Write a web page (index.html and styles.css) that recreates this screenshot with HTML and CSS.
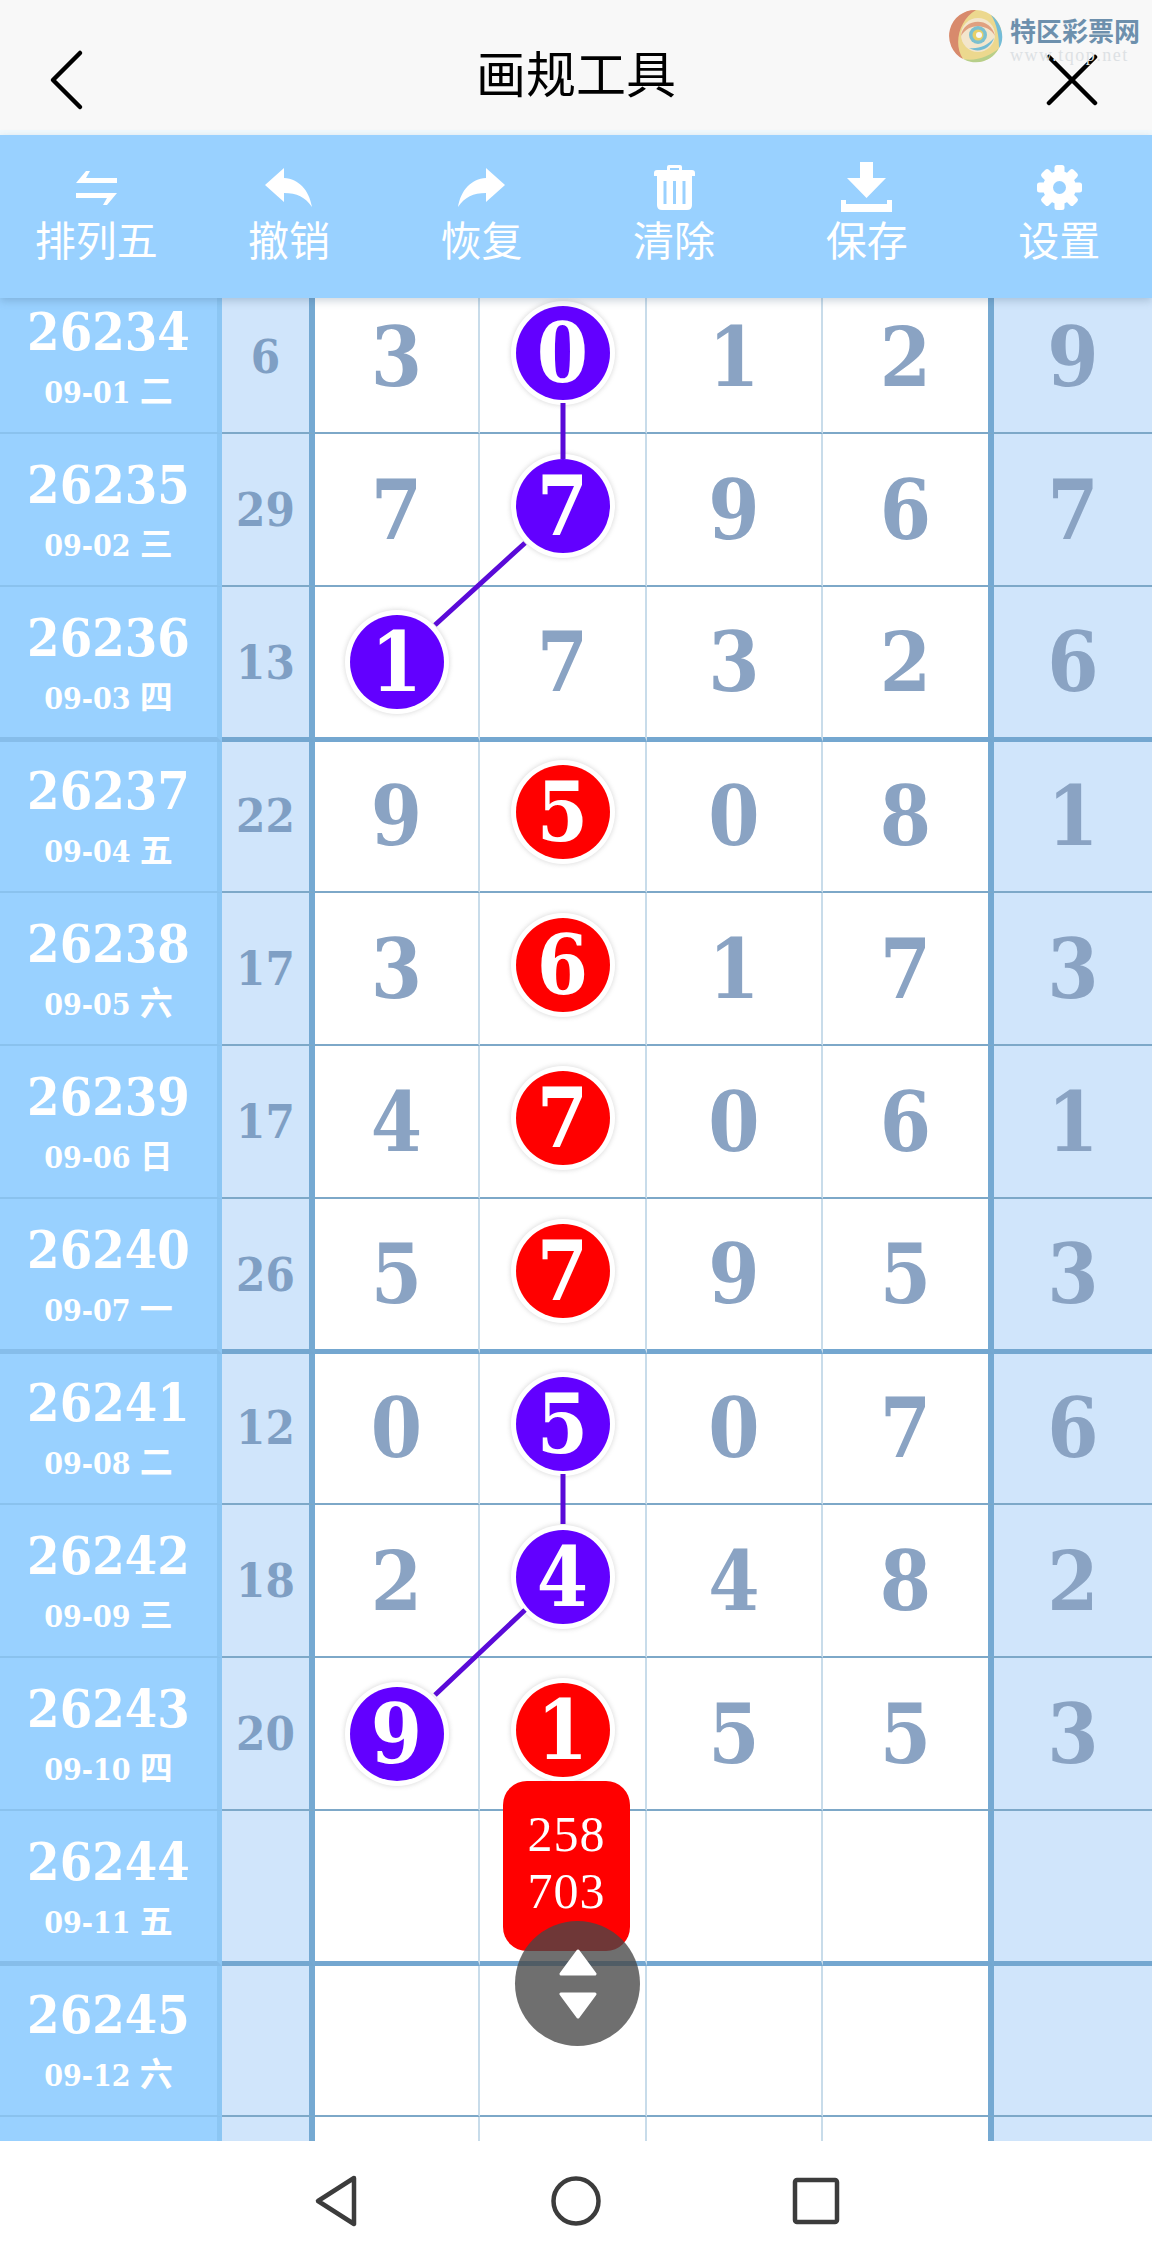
FILE: index.html
```html
<!DOCTYPE html>
<html lang="zh-CN">
  <head>
    <meta charset="UTF-8" />
    <meta name="viewport" content="width=device-width, initial-scale=1.0" />
    <title>画规工具</title>
    <link rel="stylesheet" href="styles.css">
  </head>
  <body>
    <div class="app">
      <!-- title bar -->
      <header class="topbar">
        <svg class="back-icon" width="40" height="64" viewBox="0 0 40 64">
          <path d="M34 5 L7 32 L34 59" fill="none" stroke="#000" stroke-width="4.5" stroke-linecap="round" stroke-linejoin="round" />
        </svg>
        <h1 class="title">画规工具</h1>
        <svg class="close-icon" width="52" height="52" viewBox="0 0 52 52">
          <path d="M3 3 L49 49 M49 3 L3 49" fill="none" stroke="#000" stroke-width="4.5" stroke-linecap="round" />
        </svg>
        <!-- watermark -->
        <div class="watermark">
          <svg width="54" height="56" viewBox="0 0 54 56">
            <circle cx="27" cy="28" r="26" fill="#ecd88e" />
            <path d="M27 2 A26 26 0 0 0 14 51 C4 36 10 12 27 2Z" fill="#d88a6c" />
            <path d="M14 51 A26 26 0 0 0 50 40 C42 48 26 54 14 51Z" fill="#b7cf8a" />
            <path d="M42 7 C54 16 56 32 50 40 C50 28 48 16 42 7Z" fill="#73bcd8" />
            <circle cx="29" cy="27" r="17" fill="#f3e6cc" />
            <path d="M12 28 C14 10 42 8 46 28 C40 16 20 14 12 28Z" fill="#e0a080" />
            <path d="M20 40 C30 46 42 40 45 30 C38 38 30 41 20 40Z" fill="#74bcd4" />
            <circle cx="29" cy="27" r="9" fill="#7cc0d0" />
            <circle cx="29" cy="27" r="5.5" fill="#e8d068" />
            <circle cx="30" cy="27" r="3" fill="#f8f8f8" />
          </svg>
          <div class="watermark-text">
            <div class="watermark-name">特区彩票网</div>
            <div class="watermark-url">www.tqop.net</div>
          </div>
        </div>
      </header>

      <!-- tool buttons -->
      <nav class="toolbar">
        <div class="tool">
          <div class="tool-icon">
            <svg width="41" height="35" viewBox="0 0 41 35" fill="#fff">
              <path d="M0 13 L10 1 L14 1 L10 8 L41 8 L41 13Z" />
              <path d="M0 23 L41 23 L31 35 L27 35 L31 28 L0 28Z" />
            </svg>
          </div>
          <span>排列五</span>
        </div>
        <div class="tool">
          <div class="tool-icon">
            <svg width="47" height="39" viewBox="0 0 47 39" fill="#fff">
              <path d="M0 17 L19 0 L19 10 C34 11 44 22 47 39 C40 29 32 25 19 25 L19 34Z" />
            </svg>
          </div>
          <span>撤销</span>
        </div>
        <div class="tool">
          <div class="tool-icon">
            <svg width="47" height="39" viewBox="0 0 47 39" fill="#fff">
              <path d="M47 17 L28 0 L28 10 C13 11 3 22 0 39 C7 29 15 25 28 25 L28 34Z" />
            </svg>
          </div>
          <span>恢复</span>
        </div>
        <div class="tool">
          <div class="tool-icon">
            <svg width="41" height="45" viewBox="0 0 41 45" fill="#fff">
              <path d="M13 5 L13 2 Q13 0 15 0 L26 0 Q28 0 28 2 L28 5 L38 5 Q41 5 41 8 L41 11 L0 11 L0 8 Q0 5 3 5Z M16 5 L25 5 L25 3 L16 3Z" fill-rule="evenodd" />
              <path d="M3 11 L38 11 L38 40 Q38 45 33 45 L8 45 Q3 45 3 40Z" />
              <path d="M11 16 V39 M20.500 16 V39 M30 16 V39" stroke="#99d1ff" stroke-width="3" />
            </svg>
          </div>
          <span>清除</span>
        </div>
        <div class="tool">
          <div class="tool-icon">
            <svg width="51" height="50" viewBox="0 0 51 50" fill="#fff">
              <path d="M19 0 L32 0 L32 16 L45 16 L25.500 36 L6 16 L19 16Z" />
              <path d="M0 38 L5 38 L5 42 L46 42 L46 38 L51 38 L51 50 L0 50Z" />
            </svg>
          </div>
          <span>保存</span>
        </div>
        <div class="tool">
          <div class="tool-icon">
            <svg width="45" height="45" viewBox="-22.500 -22.500 45 45" fill="#fff">
              <circle r="16.500" />
              <rect x="-5" y="-22.500" width="10" height="45" rx="2.500" />
              <rect x="-5" y="-22.500" width="10" height="45" rx="2.500" transform="rotate(45)" />
              <rect x="-5" y="-22.500" width="10" height="45" rx="2.500" transform="rotate(90)" />
              <rect x="-5" y="-22.500" width="10" height="45" rx="2.500" transform="rotate(135)" />
              <circle r="6.500" fill="#99d1ff" />
            </svg>
          </div>
          <span>设置</span>
        </div>
      </nav>

      <!-- number table -->
      <main class="board">
        <div class="rows">
          <div class="row">
            <div class="issue"><b>26234</b><small>09-01 <em>二</em></small></div>
            <div class="sum">6</div>
            <div class="num">3</div>
            <div class="num"><span class="ball purple lift">0</span></div>
            <div class="num">1</div>
            <div class="num">2</div>
            <div class="num last">9</div>
          </div>
          <div class="row">
            <div class="issue"><b>26235</b><small>09-02 <em>三</em></small></div>
            <div class="sum">29</div>
            <div class="num">7</div>
            <div class="num"><span class="ball purple lift">7</span></div>
            <div class="num">9</div>
            <div class="num">6</div>
            <div class="num last">7</div>
          </div>
          <div class="row thick">
            <div class="issue"><b>26236</b><small>09-03 <em>四</em></small></div>
            <div class="sum">13</div>
            <div class="num"><span class="ball purple">1</span></div>
            <div class="num">7</div>
            <div class="num">3</div>
            <div class="num">2</div>
            <div class="num last">6</div>
          </div>
          <div class="row">
            <div class="issue"><b>26237</b><small>09-04 <em>五</em></small></div>
            <div class="sum">22</div>
            <div class="num">9</div>
            <div class="num"><span class="ball red lift">5</span></div>
            <div class="num">0</div>
            <div class="num">8</div>
            <div class="num last">1</div>
          </div>
          <div class="row">
            <div class="issue"><b>26238</b><small>09-05 <em>六</em></small></div>
            <div class="sum">17</div>
            <div class="num">3</div>
            <div class="num"><span class="ball red lift">6</span></div>
            <div class="num">1</div>
            <div class="num">7</div>
            <div class="num last">3</div>
          </div>
          <div class="row">
            <div class="issue"><b>26239</b><small>09-06 <em>日</em></small></div>
            <div class="sum">17</div>
            <div class="num">4</div>
            <div class="num"><span class="ball red lift">7</span></div>
            <div class="num">0</div>
            <div class="num">6</div>
            <div class="num last">1</div>
          </div>
          <div class="row thick">
            <div class="issue"><b>26240</b><small>09-07 <em>一</em></small></div>
            <div class="sum">26</div>
            <div class="num">5</div>
            <div class="num"><span class="ball red lift">7</span></div>
            <div class="num">9</div>
            <div class="num">5</div>
            <div class="num last">3</div>
          </div>
          <div class="row">
            <div class="issue"><b>26241</b><small>09-08 <em>二</em></small></div>
            <div class="sum">12</div>
            <div class="num">0</div>
            <div class="num"><span class="ball purple lift">5</span></div>
            <div class="num">0</div>
            <div class="num">7</div>
            <div class="num last">6</div>
          </div>
          <div class="row">
            <div class="issue"><b>26242</b><small>09-09 <em>三</em></small></div>
            <div class="sum">18</div>
            <div class="num">2</div>
            <div class="num"><span class="ball purple lift">4</span></div>
            <div class="num">4</div>
            <div class="num">8</div>
            <div class="num last">2</div>
          </div>
          <div class="row">
            <div class="issue"><b>26243</b><small>09-10 <em>四</em></small></div>
            <div class="sum">20</div>
            <div class="num"><span class="ball purple">9</span></div>
            <div class="num"><span class="ball red lift">1</span></div>
            <div class="num">5</div>
            <div class="num">5</div>
            <div class="num last">3</div>
          </div>
          <div class="row thick">
            <div class="issue"><b>26244</b><small>09-11 <em>五</em></small></div>
            <div class="sum"></div>
            <div class="num"></div>
            <div class="num"></div>
            <div class="num"></div>
            <div class="num"></div>
            <div class="num last"></div>
          </div>
          <div class="row">
            <div class="issue"><b>26245</b><small>09-12 <em>六</em></small></div>
            <div class="sum"></div>
            <div class="num"></div>
            <div class="num"></div>
            <div class="num"></div>
            <div class="num"></div>
            <div class="num last"></div>
          </div>
          <div class="row">
            <div class="issue"></div>
            <div class="sum"></div>
            <div class="num"></div>
            <div class="num"></div>
            <div class="num"></div>
            <div class="num"></div>
            <div class="num last"></div>
          </div>
        </div>

        <!-- lines between the picked balls -->
        <svg class="links" width="1152" height="1843" viewBox="0 0 1152 1843">
          <path d="M563 105 V161 M525 245 L435 327 M563 1176 V1226 M525 1312 L435 1397" fill="none" stroke="#5a0ad8" stroke-width="5" />
        </svg>

        <div class="tip">258<br />703</div>
        <div class="updown">
          <svg width="38" height="70" viewBox="0 0 38 70" fill="#fff" stroke="#fff" stroke-width="3" stroke-linejoin="round">
            <path d="M19 2 L36 25 L2 25Z" />
            <path d="M2 45 L36 45 L19 68Z" />
          </svg>
        </div>
      </main>

      <!-- phone buttons -->
      <footer class="navbar">
        <svg width="44" height="54" viewBox="0 0 44 54">
          <path d="M40 4 L4 27 L40 50Z" fill="none" stroke="#3c3c3c" stroke-width="4.500" stroke-linejoin="round" />
        </svg>
        <svg width="52" height="52" viewBox="0 0 52 52">
          <circle cx="26" cy="26" r="22.500" fill="none" stroke="#3c3c3c" stroke-width="4.500" />
        </svg>
        <svg width="48" height="48" viewBox="0 0 48 48">
          <rect x="3" y="3" width="42" height="42" rx="2" fill="none" stroke="#3c3c3c" stroke-width="4.500" />
        </svg>
      </footer>
    </div>
  </body>
</html>
```

FILE: styles.css
```css
* {
  box-sizing: border-box;
  margin: 0;
  padding: 0;
}

body {
  background-color: white;
  font-family: "DejaVu Serif", "Noto Sans CJK SC", serif;
  font-stretch: condensed;
}

.app {
  display: flex;
  flex-direction: column;
  width: 1152px;
  height: 2259px;
  overflow: hidden;
}

/* title bar */
.topbar {
  position: relative;
  display: flex;
  align-items: center;
  justify-content: space-between;
  height: 135px;
  padding: 0 34px 0 46px;
  background-color: #f8f8f8;
  border-bottom: 5px solid #f1f9fd;
}

.title {
  position: absolute;
  left: 476px;
  top: 35px;
  font-family: "Noto Sans CJK SC", sans-serif;
  font-size: 50px;
  font-weight: 400;
  color: black;
}

.back-icon {
  margin-top: 30px;
}

.close-icon {
  margin-top: 30px;
  margin-right: 20px;
}

.watermark {
  position: absolute;
  left: 949px;
  top: 8px;
  display: flex;
  gap: 7px;
}

.watermark-text {
  padding-top: 7px;
}

.watermark-name {
  font-family: "Noto Sans CJK SC", sans-serif;
  font-size: 26px;
  line-height: 30px;
  font-weight: 700;
  color: #6d90ad;
  white-space: nowrap;
}

.watermark-url {
  font-family: "Liberation Serif", serif;
  font-size: 18px;
  line-height: 20px;
  color: #dde1e4;
  letter-spacing: 1.500px;
  white-space: nowrap;
}

/* tool buttons */
.toolbar {
  position: relative;
  z-index: 3;
  display: grid;
  grid-template-columns: repeat(6, 192.600px);
  height: 163px;
  background-color: #99d1ff;
  box-shadow: 0 3px 8px rgba(60, 90, 120, 0.25);
}

.tool {
  display: flex;
  flex-direction: column;
  align-items: center;
  color: white;
  font-family: "Noto Sans CJK SC", sans-serif;
  font-size: 41px;
  line-height: 48px;
  padding-top: 27px;
}

.tool-icon {
  display: flex;
  align-items: center;
  justify-content: center;
  height: 50px;
  margin-bottom: 2px;
}

/* number table */
.board {
  position: relative;
  height: 1843px;
  overflow: hidden;
}

.rows {
  margin-top: -17px;
}

.row {
  position: relative;
  display: grid;
  grid-template-columns: 222px 93px 165px 167px 176px 171px 158px;
  height: 153px;
}

.row.thick {
  z-index: 1;
  height: 155px;
  margin-bottom: -2px;
}

.issue,
.sum,
.num {
  display: flex;
  align-items: center;
  justify-content: center;
  border-bottom: 2px solid #7da8c8;
}

.thick .issue,
.thick .sum,
.thick .num {
  border-bottom-width: 5px;
  border-bottom-color: #74a7d0;
}

.issue {
  flex-direction: column;
  background-color: #99d1ff;
  color: white;
  border-right: 5px solid #8cc6f3;
  border-bottom-color: #8ac2ee;
}

.thick .issue {
  border-bottom-color: #86bdea;
}

.issue b {
  font-size: 52px;
  line-height: 72px;
}

.issue small {
  font-size: 30px;
  font-weight: 700;
  line-height: 48px;
}

.issue em {
  font-size: 33px;
  font-style: normal;
}

.sum {
  background-color: #d0e5fb;
  border-right: 6px solid #75a9d2;
  color: #7f9fc4;
  font-size: 47px;
  font-weight: 700;
}

.num {
  background-color: white;
  border-right: 2px solid #c8dcea;
  color: #8aa3c3;
  font-size: 82px;
  font-weight: 700;
}

.num:nth-child(6) {
  border-right: 6px solid #75a9d2;
}

.num.last {
  background-color: #d0e5fb;
  border-right: none;
}

.ball {
  display: flex;
  align-items: center;
  justify-content: center;
  width: 94px;
  height: 94px;
  border-radius: 50%;
  color: white;
  box-shadow: 0 0 0 5px white, 0 0 4px 6px rgba(120, 120, 120, 0.22);
}

.ball.lift {
  margin-bottom: 7px;
}

.purple {
  background-color: #6200ff;
}

.red {
  background-color: #ff0000;
}

.links {
  position: absolute;
  z-index: 2;
  left: 0;
  top: 0;
}

.tip {
  position: absolute;
  z-index: 2;
  left: 503px;
  top: 1483px;
  width: 127px;
  height: 170px;
  padding-top: 25px;
  background-color: #ff0000;
  border-radius: 24px;
  color: white;
  font-family: "Liberation Serif", serif;
  font-stretch: normal;
  font-size: 50px;
  letter-spacing: 1px;
  line-height: 57px;
  text-align: center;
}

.updown {
  position: absolute;
  z-index: 2;
  left: 515px;
  top: 1623px;
  display: flex;
  align-items: center;
  justify-content: center;
  width: 125px;
  height: 125px;
  border-radius: 50%;
  background-color: rgba(70, 70, 70, 0.78);
}

/* phone buttons */
.navbar {
  position: relative;
  height: 118px;
  background-color: white;
}

.navbar svg {
  position: absolute;
  top: 33px;
}

.navbar svg:nth-child(1) {
  left: 314px;
}

.navbar svg:nth-child(2) {
  left: 550px;
  top: 34px;
}

.navbar svg:nth-child(3) {
  left: 792px;
  top: 36px;
}
```
